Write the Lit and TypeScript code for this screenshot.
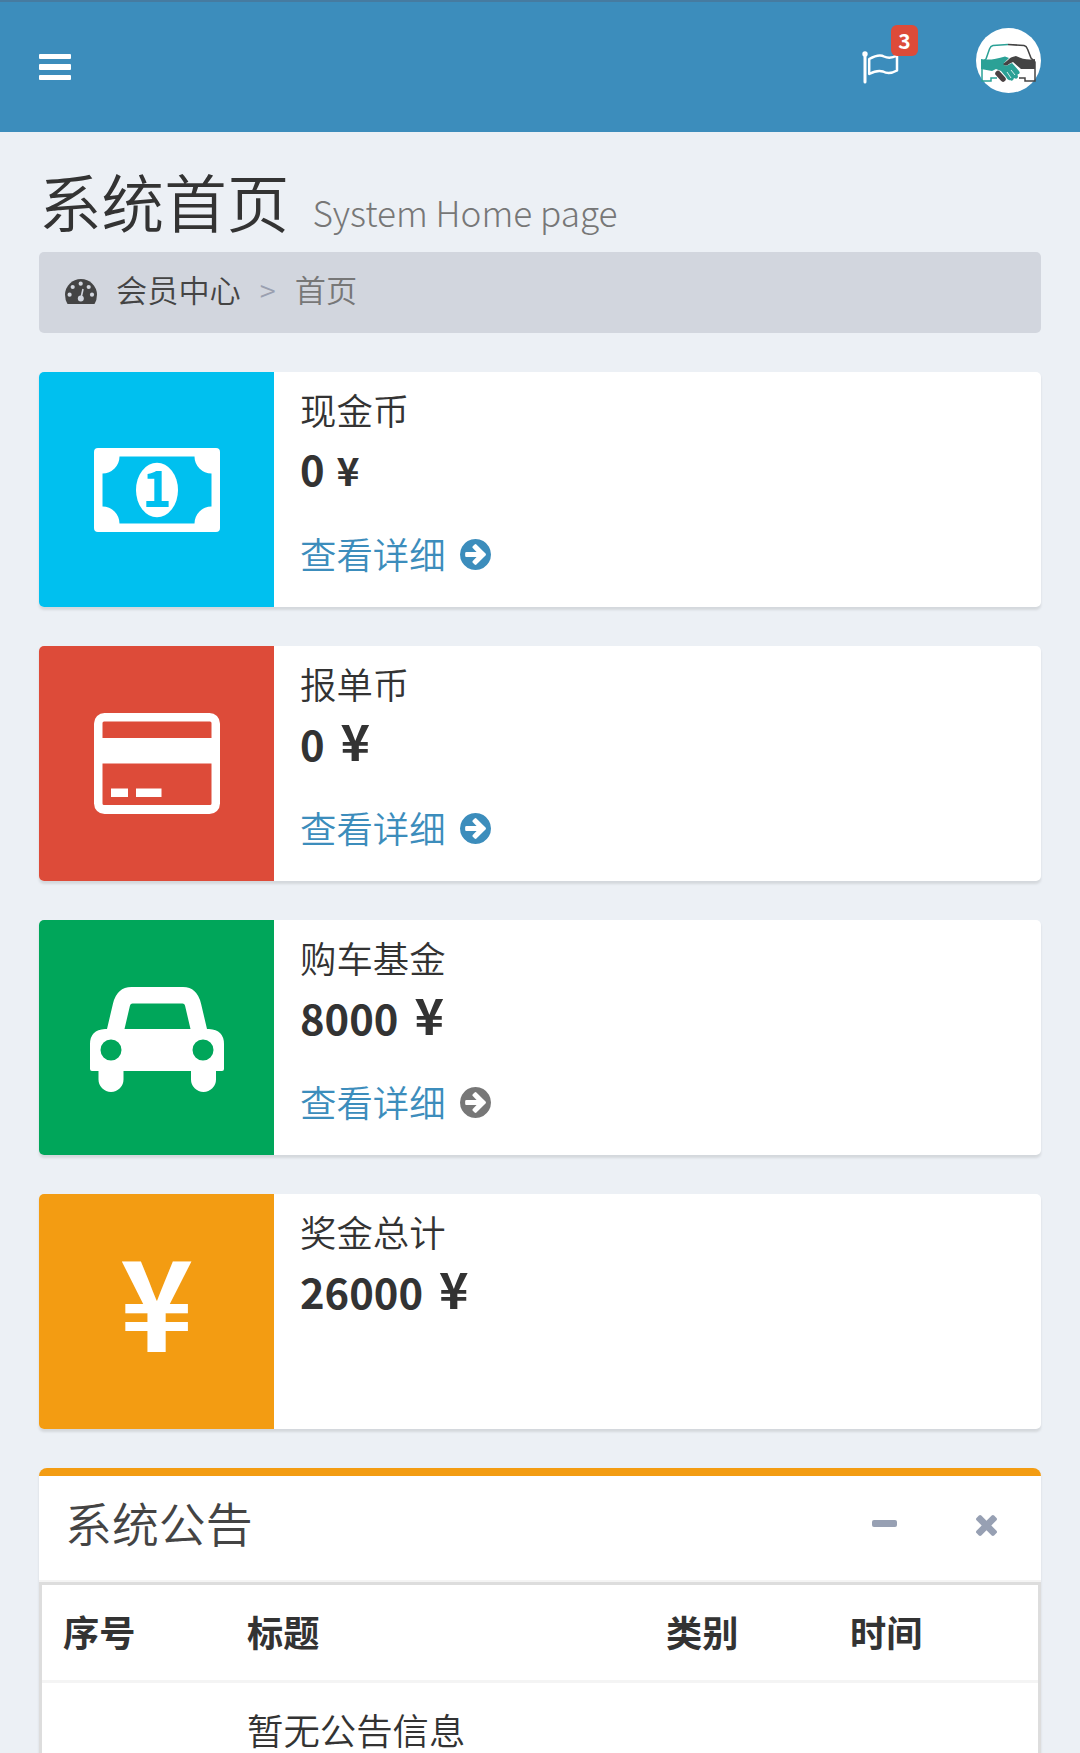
import { LitElement, html, css, svg, nothing } from "lit";
import { customElement } from "lit/decorators.js";

const ARROW =
  "M1413 896q0-27-18-45l-91-91-362-362q-18-18-45-18t-45 18l-91 91q-18 18-18 45t18 45l189 189h-502q-26 0-45 19t-19 45v128q0 26 19 45t45 19h502l-189 189q-18 18-18 45t18 45l91 91q18 18 45 18t45-18l362-362 91-91q18-18 18-45zm251 0q0 209-103 385.5t-279.5 279.5-385.5 103-385.5-103-279.5-279.5-103-385.5 103-385.5 279.5-279.5 385.5-103 385.5 103 279.5 279.5 103 385.5z";
const CLOSE =
  "M1490 1322q0 40-28 68l-136 136q-28 28-68 28t-68-28l-294-294-294 294q-28 28-68 28t-68-28l-136-136q-28-28-28-68t28-68l294-294-294-294q-28-28-28-68t28-68l136-136q28-28 68-28t68 28l294 294 294-294q28-28 68-28t68 28l136 136q28 28 28 68t-28 68l-294 294 294 294q28 28 28 68z";

const money = html`<svg width="126" height="84" viewBox="0 0 126 84">
  <path fill="#fff" fill-rule="evenodd" d="M4 0H122Q126 0 126 4V80Q126 84 122 84H4Q0 84 0 80V4Q0 0 4 0ZM25.500 8.500A17 17 0 0 1 8.500 25.500V58.500A17 17 0 0 1 25.500 75.500H100.500A17 17 0 0 1 117.500 58.500V25.500A17 17 0 0 1 100.500 8.500Z"/>
  <ellipse cx="63" cy="42" rx="21" ry="27.300" fill="#fff"/>
  <text x="63" y="58.700" text-anchor="middle" class="one">1</text>
</svg>`;

const card = html`<svg width="126" height="101" viewBox="0 0 126 101">
  <rect width="126" height="101" rx="10.500" fill="#fff"/>
  <path fill="#dd4b39" d="M10 8.500H116Q117.500 8.500 117.500 10V25H8.500V10Q8.500 8.500 10 8.500ZM8.500 50.500H117.500V90.500Q117.500 92 116 92H10Q8.500 92 8.500 90.500Z"/>
  <path fill="#fff" d="M17 75.500H34V84H17ZM42 75.500H67.500V84H42Z"/>
</svg>`;

const car = html`<svg class="car" width="134" height="105" viewBox="0 0 134 105">
  <path fill="#fff" fill-rule="evenodd" d="M17 42L23 16.500Q27 0 41.500 0H93Q107 0 111 16.500L117 42H119Q134 43 134 57V82Q134 84 132 84H126V92.500A12.500 12.500 0 0 1 101 92.500V84H33.500V92.500A12.500 12.500 0 0 1 8.500 92.500V84H2Q0 84 0 82V57Q0 43 15 42ZM34.500 42H100.500L95 18.500Q94.500 16.500 92.500 16.500H42.500Q40.500 16.500 40 18.500ZM21 52.500A10.500 10.500 0 1 0 21 73.500A10.500 10.500 0 1 0 21 52.500ZM113 52.500A10.500 10.500 0 1 0 113 73.500A10.500 10.500 0 1 0 113 52.500Z"/>
</svg>`;

const yen = html`<span class="yen">¥</span>`;

const cards = [
  { tone: "aqua", icon: money, name: "现金币", value: "0", sign: "small", link: "blue" },
  { tone: "red", icon: card, name: "报单币", value: "0", sign: "", link: "blue" },
  { tone: "green", icon: car, name: "购车基金", value: "8000", sign: "", link: "gray" },
  { tone: "orange", icon: yen, name: "奖金总计", value: "26000", sign: "", link: "" },
];

const DOTS = [[4.6, 15.700], [7.700, 8], [15.700, 4.700], [23.700, 8], [27, 15.700]];

@customElement("app-root")
export class AppRoot extends LitElement {
  static styles = css`
    :host { display: block; height: 1753px; overflow: hidden; background: #ecf0f5; color: #333;
      font: 350 36.4px/52px "Noto Sans CJK SC", sans-serif; }
    * { box-sizing: border-box; }
    svg { display: block; flex: none; }
    .top { height: 132px; background: #3c8dbc; border-top: 2px solid #467ba0; padding: 0 39px;
      display: flex; align-items: flex-start; }
    .bars { width: 31.500px; height: 26px; margin-top: 52px; display: flex; flex-direction: column; justify-content: space-between; }
    .bars i { height: 5.300px; background: #fff; border-radius: 1px; }
    .flag { position: relative; margin: 49px 77px 0 auto; width: 37px; }
    .badge { position: absolute; left: 29px; top: -26px; width: 27px; height: 31px; border-radius: 6px;
      background: #dd4b39; color: #fff; font-weight: 700; font-size: 21px; line-height: 30px; text-align: center; }
    .avatar { margin-top: 26px; }
    .main { padding: 0 39px; }
    .title { display: flex; align-items: baseline; height: 120px; margin: 0; padding-top: 24px; font-weight: 350;
      font-size: 62.600px; line-height: 88px; }
    .title small { font-size: 35.2px; font-weight: 250; color: #777; margin-left: 23px; }
    .crumb { height: 81px; border-radius: 5px; background: #d2d6de; display: flex; padding: 0 26px;
      font-size: 31.200px; line-height: 74px; color: #444; }
    .crumb svg { margin: 27px 19px 0 0; }
    .gt { font-size: 29px; color: #9aa0b0; margin: 0 19px 0 19px; }
    .here { color: #777; }
    .cards { display: flex; flex-direction: column; gap: 39px; margin: 39px 0 39px; }
    .card { display: flex; height: 235px; background: #fff; border-radius: 5px; box-shadow: 0 2.600px 2.600px rgba(0,0,0,.1); }
    .pic { width: 235px; border-radius: 5px 0 0 5px; display: flex; align-items: center; justify-content: center; }
    .car { margin-top: 3px; }
    .aqua { background: #00c0ef; } .red { background: #dd4b39; } .green { background: #00a65a; } .orange { background: #f39c12; }
    .one { font: 700 50px "Noto Sans CJK SC", sans-serif; fill: #00c0ef; }
    .yen { color: #fff; font-size: 125px; font-weight: 700; line-height: 208px; height: 235px; }
    .body { padding: 11px 26px; }
    .value { display: flex; align-items: baseline; height: 60px; line-height: 60px; font-size: 41.700px; font-weight: 700; margin-top: 3px; }
    .sign { font-size: 50px; margin-left: 16px; line-height: 54px; }
    .sign.small { font-size: 39px; margin-left: 12px; line-height: 62px; }
    .more { display: flex; align-items: center; margin-top: 29px; height: 52px; line-height: 50px; color: #3c8dbc; }
    .more svg { margin: 2px 0 0 14px; fill: #3c8dbc; }
    .more .gray { fill: #777; }
    .box { height: 400px; background: #fff; border-top: 8px solid #f39c12; border-radius: 8px 8px 0 0; box-shadow: 0 2.600px 2.600px rgba(0,0,0,.1); }
    .head { display: flex; height: 106px; border-bottom: 2px solid #f4f4f4; padding: 0 44px 0 26px; color: #444;
      font-size: 46.900px; line-height: 93px; }
    .minus { width: 25px; height: 7px; border-radius: 2px; background: #97a0b3; margin: 44px 79px 0 auto; }
    .head svg { margin-top: 39px; fill: #97a0b3; }
    .table { border: 3px solid #ddd; height: 290px; }
    .row { display: grid; grid-template-columns: 184px 419px 184px 1fr; padding: 0 21px; height: 98px; line-height: 92px; }
    .th { font-weight: 600; font-size: 36.200px; border-bottom: 3px solid #f4f4f4; }
    .td { padding-top: 27px; line-height: 38px; }
  `;

  render() {
    return html`
      <header class="top">
        <div class="bars"><i></i><i></i><i></i></div>
        <div class="flag">
          <svg width="37" height="34" viewBox="0 0 37 34" fill="none" stroke="#fff">
            <circle cx="3" cy="3" r="2.700" fill="#fff" stroke="none"/>
            <path stroke-width="3" stroke-linecap="round" d="M3 3V31"/>
            <path stroke-width="2.500" stroke-linejoin="round" d="M7.200 8Q17 2.500 22 5.500Q28 8.500 35 4.500V19.500Q27 24 21 20.500Q15.500 18.500 7.200 23Z"/>
          </svg>
          <span class="badge">3</span>
        </div>
        <svg class="avatar" width="65" height="65" viewBox="0 0 65 65">
          <circle cx="32.500" cy="32.500" r="32.500" fill="#fff"/>
          <g fill="none" stroke-width="1.500">
            <path stroke="#2ba196" d="M32 16.500L17 17.500Q14.500 18 13.500 21L10 31L6 34V53H15V50H21"/>
            <path stroke="#444" d="M32 16.500L48 17.500Q50.500 18 51.500 21L55 30L59 34V53H49V50H43"/>
          </g>
          <path fill="#2ba196" d="M5 31Q15 33 29 28.500L33 30L28 35Q27 38 31 37.500L36 35L43 43Q45 46 41.500 46.500L42 49Q41 52 38 50Q37 54 34 52Q32 53 30 49L25 43L20 41L16 43L5 41Z"/>
          <path fill="#444" d="M59 31Q50 33 40 28Q34 29 32 32L27 36Q30 39 33 36L37 34L45 41L59 41Z"/>
          <path stroke="#4a4143" stroke-width="5.500" stroke-linecap="round" d="M22 45.500L27 51"/>
          <path stroke="#fff" stroke-width=".8" fill="none" d="M35 42L39 47M31 44L35 50"/>
        </svg>
      </header>
      <main class="main">
        <h1 class="title">系统首页<small>System Home page</small></h1>
        <nav class="crumb">
          <svg width="32" height="25" viewBox="0 0 32 25">
            <path fill="#444" d="M2.500 25Q0 21 0 15.800A16 15.800 0 0 1 32 15.800Q32 21 29.500 25Z"/>
            ${DOTS.map(([x, y]) => svg`<circle cx=${x} cy=${y} r="2.100" fill="#d2d6de"/>`)}
            <path stroke="#d2d6de" stroke-width="1.600" d="M18 10L16 19"/>
            <circle cx="15.800" cy="19.500" r="3" fill="#d2d6de"/>
          </svg>
          <span>会员中心</span><span class="gt">&gt;</span><span class="here">首页</span>
        </nav>
        <section class="cards">
          ${cards.map(
            (c) => html`<article class="card">
              <div class="pic ${c.tone}">${c.icon}</div>
              <div class="body">
                <div>${c.name}</div>
                <div class="value">${c.value}<span class="sign ${c.sign}">¥</span></div>
                ${c.link
                  ? html`<div class="more">查看详细<svg class=${c.link} width="31" height="31" viewBox="128 128 1536 1536"><path d=${ARROW}/></svg></div>`
                  : nothing}
              </div>
            </article>`
          )}
        </section>
        <section class="box">
          <div class="head">系统公告<i class="minus"></i>
            <svg width="21" height="21" viewBox="302 366 1188 1188"><path d=${CLOSE}/></svg>
          </div>
          <div class="table">
            <div class="row th"><span>序号</span><span>标题</span><span>类别</span><span>时间</span></div>
            <div class="row td"><span></span><span>暂无公告信息</span></div>
          </div>
        </section>
      </main>
    `;
  }
}
